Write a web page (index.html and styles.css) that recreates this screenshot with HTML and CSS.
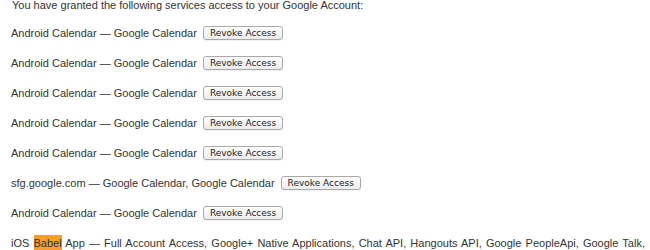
FILE: index.html
```html
<!DOCTYPE html>
<html>
<head>
<meta charset="utf-8">
<link rel="stylesheet" href="styles.css">
</head>
<body>
<div class="page">
  <p class="intro">You have granted the following services access to your Google Account:</p>
  <div class="list">
    <div class="row"><span class="label">Android Calendar — Google Calendar</span><button class="revoke">Revoke Access</button></div>
    <div class="row"><span class="label">Android Calendar — Google Calendar</span><button class="revoke">Revoke Access</button></div>
    <div class="row"><span class="label">Android Calendar — Google Calendar</span><button class="revoke">Revoke Access</button></div>
    <div class="row"><span class="label">Android Calendar — Google Calendar</span><button class="revoke">Revoke Access</button></div>
    <div class="row"><span class="label">Android Calendar — Google Calendar</span><button class="revoke">Revoke Access</button></div>
    <div class="row"><span class="label">sfg.google.com — Google Calendar, Google Calendar</span><button class="revoke">Revoke Access</button></div>
    <div class="row"><span class="label">Android Calendar — Google Calendar</span><button class="revoke">Revoke Access</button></div>
    <div class="row wide"><span class="label">iOS <span class="hl">Babel</span> App — Full Account Access, Google+ Native Applications, Chat API, Hangouts API, Google PeopleApi, Google Talk, Google Voice</span> <button class="revoke">Revoke Access</button></div>
  </div>
</div>
</body>
</html>
```

FILE: styles.css
```css
html, body {
  margin: 0;
  padding: 0;
  background: #ffffff;
}
.page {
  padding: 0 5px 0 11px;
  font-family: "Liberation Sans", Arial, sans-serif;
  font-size: 11px;
  color: #333333;
}
.intro {
  margin: 0;
  line-height: 11px;
  padding-left: 1px;
}
.list {
  display: flex;
  flex-direction: column;
  gap: 16px;
  margin-top: 15px;
}
.row {
  display: flex;
  align-items: center;
  gap: 6px;
  height: 14px;
  line-height: 14px;
  white-space: nowrap;
}
.row.wide {
  display: block;
  white-space: normal;
  height: auto;
  text-align: justify;
}
.hl {
  background: #f59d32;
  padding: 2px 0;
}
.revoke {
  font-family: "DejaVu Sans", "Lucida Grande", sans-serif;
  font-size: 9px;
  color: #222222;
  height: 14px;
  line-height: 12px;
  padding: 0 6px;
  margin: 0;
  width: 80px;
  border: 1px solid #a9a9a9;
  border-radius: 3px;
  background: linear-gradient(#ffffff, #ececec);
  box-shadow: 0 1px 0 rgba(0,0,0,0.05);
}
```
